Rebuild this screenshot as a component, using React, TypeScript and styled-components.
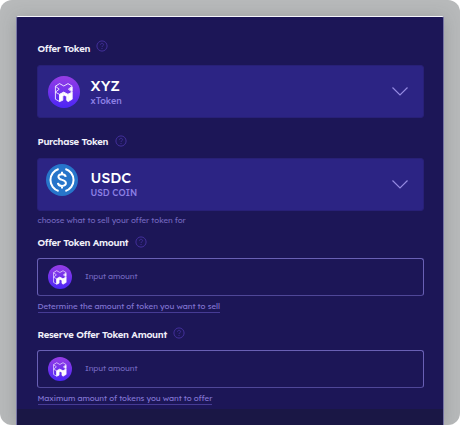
import React from 'react';
import styled, { createGlobalStyle } from 'styled-components';

const GlobalStyle = createGlobalStyle`
  * { box-sizing: border-box; }
  body { margin: 0; background: #fff; overflow: hidden; }
`;

const Backdrop = styled.div`
  width: 460px;
  height: 425px;
  padding: 16px 16px 0;
  border-radius: 12px;
  overflow: hidden;
  background: #b7b9ba;
  font-family: Lexend, Inter, 'Liberation Sans', sans-serif;
`;

const Panel = styled.main`
  display: flex;
  flex-direction: column;
  height: 409px;
  border: 1px solid #7775a3;
  border-top-color: #f4f4fa;
  border-bottom: 0;
  border-radius: 2px 2px 0 0;
  background: #1c1657;
  box-shadow: 0 2px 16px rgba(70, 75, 75, 0.26);
`;

const Form = styled.form`
  flex: 1;
  padding: 22px 19px 0 20px;
`;

const Footer = styled.footer`
  height: 16px;
  background: #1a1745;
`;

const Field = styled.section<{ $height: number }>`
  height: ${(p) => p.$height}px;
`;

const LabelRow = styled.div<{ $height: number }>`
  display: flex;
  align-items: flex-start;
  gap: 6.5px;
  height: ${(p) => p.$height}px;
`;

const Label = styled.label<{ $width: number; $top: number }>`
  width: ${(p) => p.$width}px;
  margin-top: ${(p) => p.$top}px;
  padding-left: 0.5px;
  color: #f1f0fa;
  font-size: 9.5px;
  font-weight: 600;
  line-height: 12px;
  letter-spacing: -0.28px;
  white-space: nowrap;
`;

const HelpSvg = styled.svg<{ $top: number }>`
  flex: none;
  width: 12px;
  height: 12px;
  margin-top: ${(p) => p.$top}px;
`;

const Select = styled.div<{ $inset: number; $gap: number }>`
  display: flex;
  align-items: center;
  height: 53px;
  padding: 0 15px 0 ${(p) => p.$inset}px;
  gap: ${(p) => p.$gap}px;
  border: 1px solid #282077;
  border-radius: 3px;
  background: #2c2484;
`;

const TokenMark = styled.svg<{ $size: number; $lift?: number }>`
  flex: none;
  width: ${(p) => p.$size}px;
  height: ${(p) => p.$size}px;
  margin-bottom: ${(p) => p.$lift ?? 0}px;
`;

const TokenText = styled.div<{ $lift: number }>`
  flex: 1;
  padding-bottom: ${(p) => p.$lift}px;
  white-space: nowrap;
`;

const Symbol = styled.div`
  color: #fff;
  font-size: 14.5px;
  font-weight: 500;
  line-height: 17px;
`;

const TokenName = styled.div`
  color: #8d80e4;
  font-size: 9px;
  font-weight: 500;
  line-height: 13px;
`;

const ChevronSvg = styled.svg`
  width: 16px;
  height: 9px;
`;

const AmountBox = styled.div`
  display: flex;
  align-items: center;
  gap: 13px;
  height: 38px;
  padding-left: 10px;
  border: 1px solid #6960b5;
  border-bottom-color: #4f4798;
  border-radius: 3px;
`;

const Placeholder = styled.span`
  margin-bottom: 2px;
  color: #7165bd;
  font-size: 8px;
  line-height: 12px;
  letter-spacing: -0.12px;
`;

const Hint = styled.span<{ $spacing: number; $underlined?: boolean }>`
  display: block;
  width: max-content;
  margin-top: 4px;
  margin-left: 0.5px;
  border-bottom: ${(p) => (p.$underlined ? '1px solid #463b94' : '0')};
  color: ${(p) => (p.$underlined ? '#8174d2' : '#7165bd')};
  font-size: 8px;
  line-height: ${(p) => (p.$underlined ? 12 : 11)}px;
  letter-spacing: ${(p) => p.$spacing}px;
  white-space: nowrap;
`;

const Help = ({ top = 0 }: { top?: number }) => (
  <HelpSvg $top={top} viewBox="0 0 12 12" fill="none" stroke="#43309a" strokeWidth="1">
    <circle cx="6" cy="6" r="5.1" />
    <path d="M4.5 4.8C4.5 3.8 5.1 3.3 6 3.3s1.6.5 1.6 1.3c0 1.1-1.6 1.2-1.6 2.4M6 8v1" strokeWidth="0.9" />
  </HelpSvg>
);

const Chevron = () => (
  <ChevronSvg viewBox="0 0 16 9" fill="none">
    <path d="M.5.5 8 8 15.5.5" stroke="#9389e0" strokeWidth="1.2" />
  </ChevronSvg>
);

const XMark = ({ size }: { size: number }) => {
  const id = `xmark-${React.useId().replace(/:/g, '')}`;
  return (
    <TokenMark $size={size} viewBox="0 0 32 32">
      <defs>
        <linearGradient id={id} x1="0" y1="0" x2="0" y2="1">
          <stop stopColor="#973de5" />
          <stop offset="1" stopColor="#4b26f5" />
        </linearGradient>
      </defs>
      <circle cx="16" cy="16" r="16" fill={`url(#${id})`} />
      <g stroke="#f4efff" strokeWidth="0.9" strokeLinejoin="round">
        <path d="M7.4 10.2 11.6 7.6 15.8 10 20 7.6 24.2 10.2 20.4 13.2 24.2 16.2 20 18.4 15.8 16.2 11.6 18.4 7.4 16.2 11.2 13.2Z" fill="none" />
        <path d="M7.4 10.2V23.2L11.6 25.6V18.4" fill="none" />
        <path d="M11.6 18.4 15.8 16.2V19.5L14.8 20.2V24.2L11.6 25.6Z" fill="#fff" />
        <path d="M20 18.4 24.2 16.2V23.2L20 25.6ZM21.6 13.2 24.2 11V15.4Z" fill="#fff" />
        <path d="M15.8 16.2 20 18.4V25.6L18.3 24.2V20.5L15.8 19.2Z" fill="#fff" strokeWidth="0.3" />
      </g>
    </TokenMark>
  );
};

const UsdcMark = () => (
  <TokenMark $size={32} $lift={10} viewBox="0 0 32 32">
    <circle cx="16" cy="16" r="16" fill="#2775ca" />
    <g fill="none" stroke="#fff" strokeWidth="2">
      <path d="M12.6 5A11.5 11.5 0 0 0 12.6 27M19.4 5A11.5 11.5 0 0 1 19.4 27" />
      <path d="M19.7 12.9C19.5 11 18.1 10.2 16 10.2c-2.2 0-3.6 1-3.6 2.6 0 4.3 7.5 1.9 7.5 6.3 0 1.8-1.6 2.8-3.9 2.8-2.5 0-3.9-1.1-4.1-3M16 7.7v2.5M16 21.9v2.5" />
    </g>
  </TokenMark>
);

export default function App() {
  return (
    <>
      <GlobalStyle />
      <Backdrop>
        <Panel>
          <Form>
            <Field $height={97}>
              <LabelRow $height={26}>
                <Label $width={52} $top={3}>Offer Token</Label>
                <Help top={1} />
              </LabelRow>
              <Select $inset={10} $gap={10.6}>
                <XMark size={32} />
                <TokenText $lift={0}>
                  <Symbol>XYZ</Symbol>
                  <TokenName>xToken</TokenName>
                </TokenText>
                <Chevron />
              </Select>
            </Field>
            <Field $height={100}>
              <LabelRow $height={22}>
                <Label $width={71} $top={-1}>Purchase Token</Label>
                <Help top={-1} />
              </LabelRow>
              <Select $inset={7.5} $gap={13}>
                <UsdcMark />
                <TokenText $lift={2}>
                  <Symbol>USDC</Symbol>
                  <TokenName>USD COIN</TokenName>
                </TokenText>
                <Chevron />
              </Select>
              <Hint $spacing={-0.1}>choose what to sell your offer token for</Hint>
            </Field>
            <Field $height={91}>
              <LabelRow $height={22}>
                <Label $width={91} $top={0}>Offer Token Amount</Label>
                <Help />
              </LabelRow>
              <AmountBox>
                <XMark size={24} />
                <Placeholder>Input amount</Placeholder>
              </AmountBox>
              <Hint $spacing={-0.05} $underlined>Determine the amount of token you want to sell</Hint>
            </Field>
            <Field $height={80}>
              <LabelRow $height={23}>
                <Label $width={129} $top={1}>Reserve Offer Token Amount</Label>
                <Help />
              </LabelRow>
              <AmountBox>
                <XMark size={24} />
                <Placeholder>Input amount</Placeholder>
              </AmountBox>
              <Hint $spacing={-0.07} $underlined>Maximum amount of tokens you want to offer</Hint>
            </Field>
          </Form>
          <Footer />
        </Panel>
      </Backdrop>
    </>
  );
}
